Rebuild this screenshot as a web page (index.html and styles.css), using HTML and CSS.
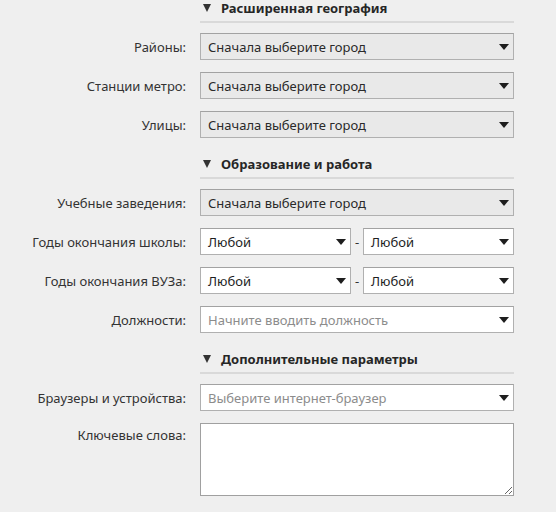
FILE: index.html
```html
<!DOCTYPE html>
<html lang="ru">
<head>
<meta charset="utf-8">
<title>Расширенный поиск</title>
<link rel="stylesheet" href="styles.css">
</head>
<body>
<div class="form">
  <div class="section-head first"><span class="tri"></span>Расширенная география</div>
  <div class="row"><div class="label">Районы:</div><div class="select disabled"><span>Сначала выберите город</span><span class="arrow"></span></div></div>
  <div class="row"><div class="label">Станции метро:</div><div class="select disabled"><span>Сначала выберите город</span><span class="arrow"></span></div></div>
  <div class="row"><div class="label">Улицы:</div><div class="select disabled"><span>Сначала выберите город</span><span class="arrow"></span></div></div>

  <div class="section-head"><span class="tri"></span>Образование и работа</div>
  <div class="row"><div class="label">Учебные заведения:</div><div class="select disabled"><span>Сначала выберите город</span><span class="arrow"></span></div></div>
  <div class="row"><div class="label">Годы окончания школы:</div>
    <div class="range">
      <div class="select"><span>Любой</span><span class="arrow"></span></div>
      <span class="dash">-</span>
      <div class="select"><span>Любой</span><span class="arrow"></span></div>
    </div>
  </div>
  <div class="row"><div class="label">Годы окончания ВУЗа:</div>
    <div class="range">
      <div class="select"><span>Любой</span><span class="arrow"></span></div>
      <span class="dash">-</span>
      <div class="select"><span>Любой</span><span class="arrow"></span></div>
    </div>
  </div>
  <div class="row"><div class="label">Должности:</div><div class="select"><span class="placeholder">Начните вводить должность</span><span class="arrow"></span></div></div>

  <div class="section-head"><span class="tri"></span>Дополнительные параметры</div>
  <div class="row"><div class="label">Браузеры и устройства:</div><div class="select"><span class="placeholder">Выберите интернет-браузер</span><span class="arrow"></span></div></div>
  <div class="row top"><div class="label">Ключевые слова:</div><textarea class="textarea"></textarea></div>
</div>
</body>
</html>
```
FILE: styles.css
```css
html, body {
  margin: 0;
  padding: 0;
  background: #efefef;
}
body {
  font-family: "Noto Sans", "Open Sans", sans-serif;
  font-size: 13px;
  color: #2b2b2b;
}
.form {
  width: 514px;
}
.section-head {
  margin-left: 200px;
  width: 314px;
  margin-top: 12px;
  padding: 6px 0 5px 3px;
  box-sizing: border-box;
  line-height: 16px;
  font-weight: bold;
  color: #262626;
  border-bottom: 2px solid #d9d9d9;
  display: flex;
  align-items: center;
}
.section-head.first {
  margin-top: 0;
  padding-top: 0;
}
.tri {
  width: 0;
  height: 0;
  border-left: 4px solid transparent;
  border-right: 4px solid transparent;
  border-top: 8px solid #333;
  margin-right: 10px;
}
.row {
  display: grid;
  grid-template-columns: 186px 314px;
  column-gap: 14px;
  align-items: center;
  margin-top: 12px;
}
.section-head + .row {
  margin-top: 10px;
}
.row.top {
  align-items: start;
}
.row.top .label {
  padding-top: 4px;
}
.label {
  text-align: right;
  color: #333;
  line-height: 16px;
  white-space: nowrap;
}
.select {
  height: 27px;
  box-sizing: border-box;
  border: 1px solid #b0b0b0;
  border-top-color: #a2a2a2;
  background: #fff;
  display: flex;
  align-items: center;
  justify-content: space-between;
  padding: 0 4px 0 7px;
  color: #1e1e1e;
  white-space: nowrap;
  overflow: hidden;
}
.select.disabled {
  background: #e9e9e9;
  color: #2a2a2a;
}
.placeholder {
  color: #8c8c8c;
}
.arrow {
  flex: none;
  width: 0;
  height: 0;
  border-left: 5px solid transparent;
  border-right: 5px solid transparent;
  border-top: 6px solid #1e1e1e;
}
.range {
  display: grid;
  grid-template-columns: 1fr 12px 1fr;
  align-items: center;
}
.dash {
  text-align: center;
  color: #333;
}
.textarea {
  display: block;
  width: 314px;
  height: 73px;
  box-sizing: border-box;
  border: 1px solid #a0a0a0;
  background: #fff;
  margin: 0;
  resize: vertical;
  font: inherit;
}
```
